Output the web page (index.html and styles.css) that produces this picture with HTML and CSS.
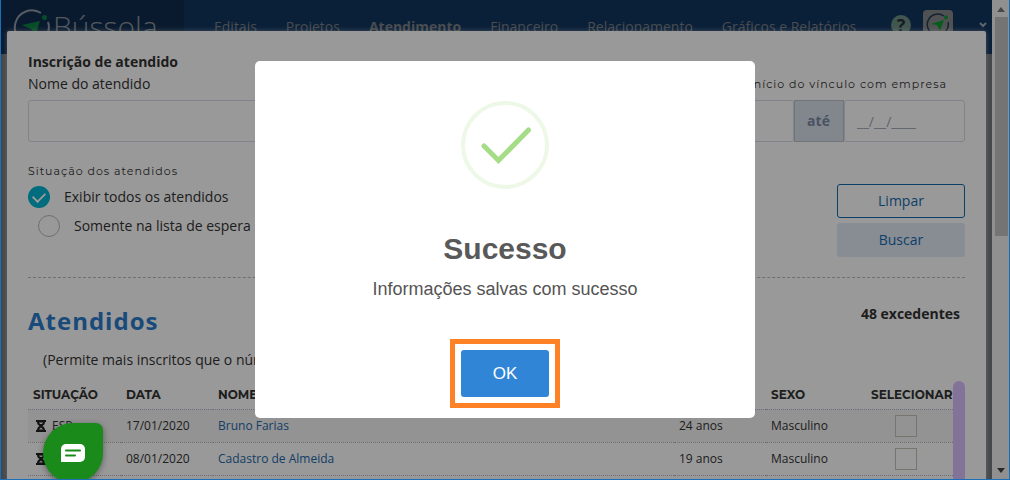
FILE: index.html
```html
<!DOCTYPE html>
<html lang="pt-BR">
<head>
    <meta charset="UTF-8">
    <meta name="viewport" content="width=device-width, initial-scale=1.0">
    <title>Bússola - Atendimento</title>
    <link rel="stylesheet" href="styles.css">
</head>
<body>
    <div class="page">
        <div class="content">
            <header class="topbar">
                <a href="#" class="brand">
                    <svg width="38" height="36" viewBox="0 0 38 36" fill="none">
                        <path d="M28 4A17 17 0 1 0 35 13" stroke="#909aa5" stroke-width="2"/>
                        <circle cx="31.500" cy="8.500" r="2.500" fill="#0c8044"/>
                        <path d="M9 16l18-4-4 13-5-5z" fill="#0c8044"/>
                    </svg>
                    <span>Bússola</span>
                </a>
                <nav class="menu">
                    <a href="#">Editais</a>
                    <a href="#">Projetos</a>
                    <a href="#" class="active">Atendimento</a>
                    <a href="#">Financeiro</a>
                    <a href="#">Relacionamento</a>
                    <a href="#">Gráficos e Relatórios</a>
                </nav>
                <div class="user">
                    <a href="#" class="help">?</a>
                    <span class="avatar">
                        <svg width="24" height="24" viewBox="0 0 24 24" fill="none">
                            <path d="M18 3A10.500 10.500 0 1 0 22 9" stroke="#233a50" stroke-width="1.500"/>
                            <circle cx="20" cy="4.500" r="2" fill="#0a9a30"/>
                            <path d="M5 11l13-4-4 11-3-6z" fill="#0a9a30"/>
                        </svg>
                    </span>
                    <svg class="caret" width="8" height="6" viewBox="0 0 8 6" fill="none" stroke="#a0a8b0" stroke-width="2">
                        <path d="M1 1l3 3 3-3"/>
                    </svg>
                </div>
            </header>

            <!-- Inscrição -->
            <main class="panel">
                <h1>Inscrição de atendido</h1>
                <form>
                    <div class="form-row">
                        <div class="field name-field">
                            <label for="nome">Nome do atendido</label>
                            <input type="text" id="nome">
                        </div>
                        <div class="field date-field">
                            <label for="inicio" class="small-label">Início do vínculo com empresa</label>
                            <div class="date-group">
                                <input type="text" id="inicio">
                                <span class="addon">até</span>
                                <input type="text" aria-label="Data final" placeholder="__/__/____">
                            </div>
                        </div>
                    </div>
                    <div class="form-row options-row">
                        <div class="options">
                            <p class="small-label">Situação dos atendidos</p>
                            <label class="option"><input type="checkbox" class="round" checked>Exibir todos os atendidos</label>
                            <label class="option sub"><input type="checkbox" class="round">Somente na lista de espera</label>
                        </div>
                        <div class="actions">
                            <button type="reset" class="btn btn-outline">Limpar</button>
                            <button type="button" class="btn btn-light">Buscar</button>
                        </div>
                    </div>
                </form>

                <div class="list-head">
                    <h2>Atendidos</h2>
                    <strong>48 excedentes</strong>
                </div>
                <p class="note">(Permite mais inscritos que o número de vagas)</p>

                <div class="table-wrap">
                    <table>
                        <thead>
                            <tr>
                                <th class="col-sit">Situação</th>
                                <th class="col-std">Data</th>
                                <th>Nome</th>
                                <th class="col-std">Idade</th>
                                <th class="col-std">Sexo</th>
                                <th class="col-sel">Selecionar</th>
                            </tr>
                        </thead>
                        <tbody>
                            <tr>
                                <td><svg class="hourglass" width="10" height="12" viewBox="0 0 10 12"><path d="M0 0h10v2H9c0 2-1 3-2.500 4C8 7 9 8 9 10h1v2H0v-2h1c0-2 1-3 2.500-4C2 5 1 4 1 2H0z" fill="#222"/><path d="M3 2.500h4L6 4H4zM3 9.500h4L5 7.500z" fill="#eee"/></svg><abbr title="Lista de espera">ESP</abbr></td>
                                <td>17/01/2020</td>
                                <td><a href="#">Bruno Farias</a></td>
                                <td>24 anos</td>
                                <td>Masculino</td>
                                <td class="select"><input type="checkbox" class="square" aria-label="Selecionar Bruno Farias"></td>
                            </tr>
                            <tr>
                                <td><svg class="hourglass" width="10" height="12" viewBox="0 0 10 12"><path d="M0 0h10v2H9c0 2-1 3-2.500 4C8 7 9 8 9 10h1v2H0v-2h1c0-2 1-3 2.500-4C2 5 1 4 1 2H0z" fill="#222"/><path d="M3 2.500h4L6 4H4zM3 9.500h4L5 7.500z" fill="#eee"/></svg><abbr title="Lista de espera">ESP</abbr></td>
                                <td>08/01/2020</td>
                                <td><a href="#">Cadastro de Almeida</a></td>
                                <td>19 anos</td>
                                <td>Masculino</td>
                                <td class="select"><input type="checkbox" class="square" aria-label="Selecionar Cadastro de Almeida"></td>
                            </tr>
                        </tbody>
                    </table>
                    <div class="table-scroll"></div>
                </div>
            </main>
        </div>
        <div class="scrollbar">
            <svg width="8" height="5" viewBox="0 0 8 5"><path d="M0 5l4-5 4 5z" fill="#777"/></svg>
            <div class="thumb"></div>
            <svg width="8" height="5" viewBox="0 0 8 5"><path d="M0 0h8L4 5z" fill="#444"/></svg>
        </div>
    </div>

    <!-- Modal -->
    <div class="overlay">
        <div class="modal" role="dialog" aria-labelledby="modal-title">
            <svg class="success" width="88" height="88" viewBox="0 0 88 88" fill="none">
                <circle cx="44" cy="44" r="42" stroke="#edf8e7" stroke-width="4"/>
                <path d="M23 45l14.500 14.500L67.500 29" stroke="#a5dc86" stroke-width="5" stroke-linecap="round"/>
            </svg>
            <h2 id="modal-title">Sucesso</h2>
            <p>Informações salvas com sucesso</p>
            <div class="highlight">
                <button type="button" class="ok">OK</button>
            </div>
        </div>
    </div>

    <button type="button" class="chat" aria-label="Chat">
        <svg width="24" height="18" viewBox="0 0 24 18" fill="none">
            <path d="M5 0h14a5 5 0 0 1 5 5v8a5 5 0 0 1-5 5H0V5a5 5 0 0 1 5-5z" fill="#fff"/>
            <path d="M5 6.500h14M5 11.500h9" stroke="#1a8a1a" stroke-width="2" stroke-linecap="round"/>
        </svg>
    </button>
    <div class="frame"></div>
</body>
</html>
```

FILE: styles.css
```css
* {
    box-sizing: border-box;
}
body {
    margin: 0;
    font-family: "Open Sans", "Noto Sans", sans-serif;
    font-size: 14px;
    line-height: 20px;
    color: #333;
    overflow: hidden;
}
h1, h2, p {
    margin: 0;
}
a {
    color: #2368ab;
    text-decoration: none;
}
.page {
    display: flex;
    height: 100vh;
}
.content {
    position: relative;
    flex: 1;
    min-width: 0;
    overflow: hidden;
    background-color: #74787c;
}

/* Top bar */
.topbar {
    display: flex;
    align-items: center;
    height: 54px;
    background-color: #12365f;
    white-space: nowrap;
}
.brand {
    display: flex;
    align-items: center;
    gap: 2px;
    width: 184px;
    height: 100%;
    padding-left: 13px;
    background-color: #112c4e;
    color: #8a939e;
    font-size: 30px;
    font-weight: 300;
}
.menu {
    display: flex;
    gap: 29px;
    padding-left: 30px;
}
.menu a {
    color: #7a7f85;
}
.menu .active {
    font-weight: 700;
}
.user {
    display: flex;
    align-items: center;
    gap: 12px;
    margin-left: auto;
    padding: 0 5px 4px 0;
}
.help {
    width: 20px;
    height: 20px;
    border-radius: 50%;
    background-color: #6f8f86;
    color: #23303a;
    font-size: 18px;
    font-weight: 700;
    text-align: center;
}
.avatar {
    display: flex;
    align-items: center;
    justify-content: center;
    width: 30px;
    height: 30px;
    border-radius: 4px;
    background-color: #85888b;
}
.caret {
    margin-left: 14px;
}

/* Panel over the page */
.panel {
    position: absolute;
    top: 31px;
    right: 6px;
    bottom: 0;
    left: 7px;
    padding: 21px 21px 0;
    overflow: hidden;
    border-radius: 2px 2px 0 0;
    background-color: #fff;
    box-shadow: 0 0 5px rgba(255, 255, 255, 0.4);
}
h1 {
    font-size: 14px;
    line-height: 20px;
}
.form-row {
    display: flex;
    justify-content: space-between;
}
.field label {
    display: block;
    height: 28px;
    line-height: 24px;
}
.name-field {
    width: 45%;
}
.date-field {
    width: 293px;
}
.small-label,
.field .small-label {
    font-family: Montserrat, Inter, sans-serif;
    font-size: 11px;
    letter-spacing: 1px;
}
.date-field .small-label {
    padding-right: 18px;
    text-align: right;
}
input[type="text"] {
    width: 100%;
    height: 42px;
    padding: 0 12px;
    border: 1px solid #d5dbe6;
    border-radius: 3px;
    background-color: #fff;
    font: inherit;
}
input::placeholder {
    color: #a0a8b8;
}
.date-group {
    display: flex;
}
.date-group input {
    flex: 1;
    min-width: 0;
}
.addon {
    width: 50px;
    border: 1px solid #bcc3ce;
    background-color: #d9e1ed;
    color: #7b8ba3;
    font-weight: 700;
    line-height: 40px;
    text-align: center;
}
.options-row {
    margin-top: 19px;
    padding-bottom: 20px;
    border-bottom: 1px dashed #b8b8c4;
}
.option {
    display: flex;
    align-items: center;
    gap: 14px;
    margin-top: 5px;
}
.options .sub {
    margin: 7px 0 0 10px;
}
input[type="checkbox"] {
    appearance: none;
    width: 22px;
    height: 22px;
    margin: 0;
    border: 1px solid #bbb;
}
.round {
    border-radius: 50%;
}
.round:checked {
    display: flex;
    align-items: center;
    justify-content: center;
    border: none;
    background-color: #00b4d0;
}
.round:checked::after {
    content: "";
    width: 10px;
    height: 6px;
    margin-bottom: 2px;
    border-left: 2px solid #fff;
    border-bottom: 2px solid #fff;
    transform: rotate(-45deg);
}
.actions {
    display: flex;
    flex-direction: column;
    gap: 5px;
    width: 128px;
    padding-top: 23px;
}
.btn {
    height: 34px;
    border: 1px solid #e3eaf5;
    border-radius: 3px;
    background-color: #e3eaf5;
    color: #136bb0;
    font: inherit;
    cursor: pointer;
}
.btn-outline {
    border-color: #136bb0;
    background-color: #fff;
}

/* List */
.list-head {
    display: flex;
    justify-content: space-between;
    padding: 26px 5px 0 0;
}
.list-head h2 {
    color: #2c7ccb;
    font-size: 24px;
    line-height: 34px;
    letter-spacing: 1px;
}
.note {
    padding: 12px 0 0 15px;
}
.table-wrap {
    display: flex;
    margin-top: 11px;
}
.table-scroll {
    width: 12px;
    height: 300px;
    border-radius: 6px;
    background-color: #dcc0ff;
}
table {
    flex: 1;
    width: 100%;
    height: 28px;
    border-collapse: collapse;
    table-layout: fixed;
    font-size: 12px;
}
th {
    height: 28px;
    padding: 0 5px;
    border-bottom: 1px dotted #b8b8cc;
    font-family: Montserrat, Inter, sans-serif;
    text-align: left;
    text-transform: uppercase;
}
td {
    height: 33px;
    padding: 0 5px;
    border-bottom: 1px dotted #b8b8b8;
}
tbody tr:nth-child(odd) {
    background-color: #f5f5f5;
}
.col-sit {
    width: 93px;
}
.col-std {
    width: 92px;
}
.col-sel {
    width: 95px;
    padding: 0 0 0 13px;
}
.select input {
    display: block;
    margin: 0 auto;
    border-color: #c8c4b8;
}
.hourglass {
    margin: 0 6px 0 3px;
    vertical-align: middle;
}

/* Browser scrollbar */
.scrollbar {
    display: flex;
    flex-direction: column;
    align-items: center;
    width: 18px;
    padding: 7px 0;
    background-color: #f1f1f1;
}
.thumb {
    width: 13px;
    height: 47%;
    margin: 5px 0 auto;
    background-color: #c1c1c1;
}

/* Modal */
.overlay {
    position: fixed;
    inset: 0;
    display: flex;
    align-items: center;
    justify-content: center;
    padding-bottom: 2px;
    background-color: rgba(0, 0, 0, 0.4);
}
.modal {
    display: flex;
    flex-direction: column;
    align-items: center;
    width: 500px;
    padding: 40px 20px 10px;
    border-radius: 5px;
    background-color: #fff;
    color: #545454;
    font-family: "Liberation Sans", Arial, sans-serif;
    font-size: 18px;
}
.modal h2 {
    margin-top: 40px;
    color: #595959;
    font-size: 30px;
    line-height: 40px;
}
.modal p {
    margin-top: 10px;
}
.highlight {
    margin-top: 40px;
    padding: 6px;
    border: 5px solid #ff8126;
}
.ok {
    display: block;
    padding: 0 32px;
    border: none;
    border-radius: 3px;
    background-color: #3085d6;
    color: #fff;
    font-family: inherit;
    font-size: 17px;
    line-height: 47px;
    cursor: pointer;
}
.chat {
    position: fixed;
    bottom: -3px;
    left: 43px;
    display: flex;
    align-items: center;
    justify-content: center;
    width: 60px;
    height: 60px;
    border: none;
    border-radius: 50% 7px 50% 50%;
    background-color: #1a8a1a;
    box-shadow: 0 2px 6px rgba(0, 0, 0, 0.4);
    cursor: pointer;
}
.frame {
    position: fixed;
    inset: 0;
    border: 1px solid #1a70b8;
    border-top: none;
    pointer-events: none;
}
```
